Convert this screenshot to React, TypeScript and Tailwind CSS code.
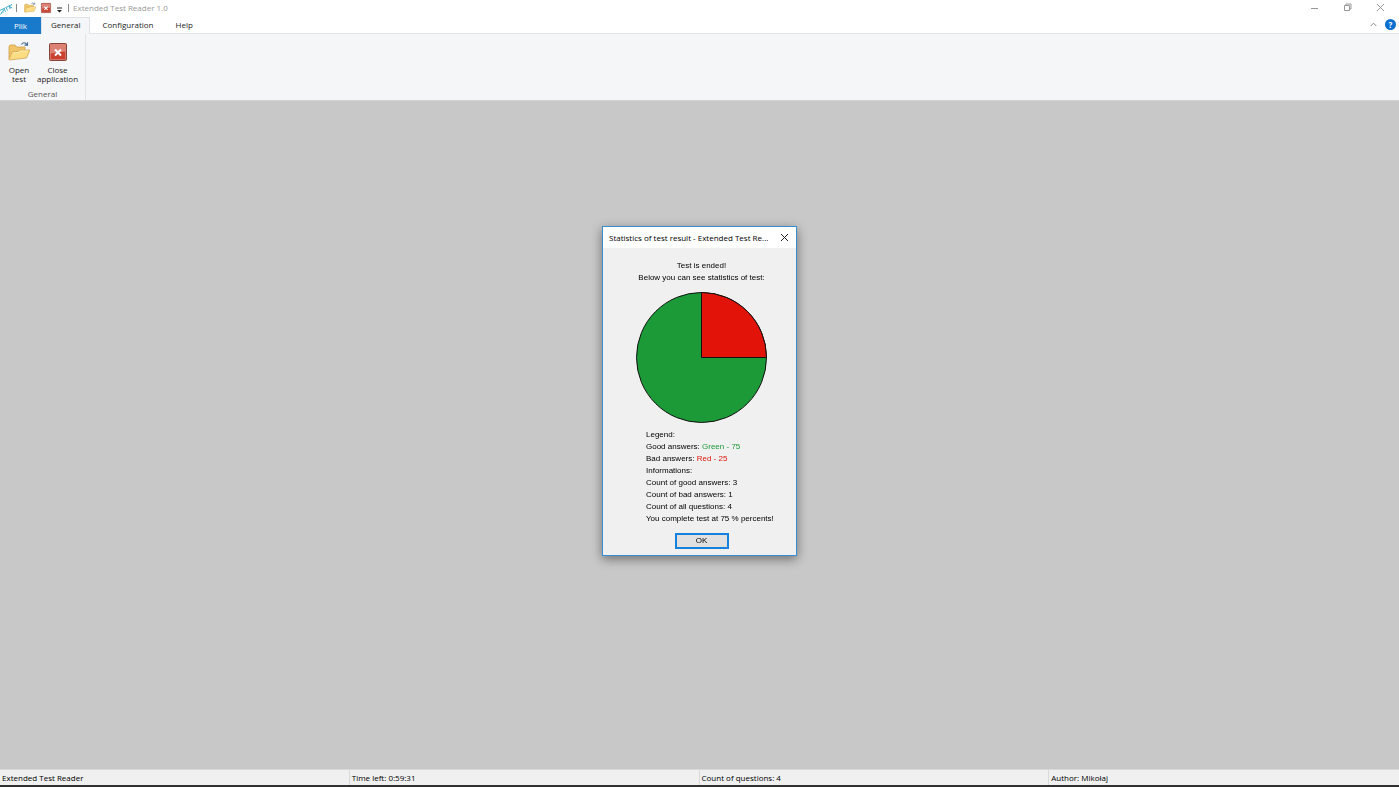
import { useState } from "react"

const TABS = ["General", "Configuration", "Help"]

const STATUS = [
  "Extended Test Reader",
  "Time left: 0:59:31",
  "Count of questions: 4",
  "Author: Mikołaj",
]

const GOOD = 3
const BAD = 1

export default function App() {
  const [tab, setTab] = useState("General")
  const [showStats, setShowStats] = useState(true)

  return (
    <div className="flex h-screen flex-col overflow-hidden bg-[#c8c8c8] font-['Open_Sans','Noto_Sans',sans-serif] text-[8px] leading-[10px] text-[#1e1e1e]">
      <TitleBar />

      {/* Ribbon tabs */}
      <nav className="flex h-[17px] shrink-0 bg-white shadow-[inset_0_-1px_0_#e3e5e8]">
        <button className="w-[41px] bg-[#1979ca] text-white">Plik</button>
        <div className="flex gap-[2px]">
          {TABS.map((t) => (
            <button
              key={t}
              onClick={() => setTab(t)}
              className={`border-x border-t px-[9px] pb-[2px] ${t === tab ? "border-[#dfe2e6] bg-[#f5f6f7]" : "border-transparent"}`}
            >
              {t}
            </button>
          ))}
        </div>
        <div className="ml-auto flex items-center gap-2 pr-[3px] pb-[2px]">
          <button aria-label="Collapse ribbon">
            <svg width="7" height="5" viewBox="0 0 7 5" fill="none" stroke="#888">
              <path d="M.7 4 3.5 1.2 6.3 4" />
            </svg>
          </button>
          <button aria-label="Help" className="h-[11px] w-[11px] rounded-full bg-[#0b6fd0] text-[8px] leading-[11px] font-bold text-white">
            ?
          </button>
        </div>
      </nav>

      {/* Ribbon */}
      <section className="flex h-[67px] shrink-0 border-b border-[#d2d4d6] bg-[#f5f6f7]">
        <div className="flex w-[86px] flex-col border-r border-[#e2e4e6] pt-[7px] pb-px">
          <div className="flex flex-1">
            <button className="flex w-[38px] flex-col items-center">
              <FolderIcon size={22} />
              <span className="mt-[2px] leading-[9px]">Open<br />test</span>
            </button>
            <button className="flex w-[39px] flex-col items-center">
              <CloseAppIcon size={22} />
              <span className="mt-[2px] leading-[9px]">Close<br />application</span>
            </button>
          </div>
          <p className="text-center text-[#555]">General</p>
        </div>
      </section>

      <main className="flex-1" />

      <footer className="grid h-[18px] shrink-0 grid-cols-4 border-t border-b-2 border-t-[#d8d8d8] border-b-[#303030] bg-[#f0f0f0] text-black">
        {STATUS.map((s) => (
          <span key={s} className="border-r border-[#d9d9d9] pt-[3px] pl-[2px] last:border-r-0">{s}</span>
        ))}
      </footer>

      {showStats && <StatsDialog onClose={() => setShowStats(false)} />}
    </div>
  )
}

function TitleBar() {
  return (
    <header className="flex h-[17px] shrink-0 items-center bg-white pb-px">
      <svg width="13" height="13" viewBox="0 0 13 13" fill="none" stroke="#45afd0" strokeWidth="1">
        <path d="M0 8.5 2.5 7l1 2-2.5 2M2.8 7.2l2.5-1.4M4 6.5 5.5 10M6 5.2 7.5 8.5M6 5.3l2.8-1M9 3l1 4M9.5 5 12 2M9.8 5l2.5 1" />
        <path d="M0 12.5 3.5 10.2M9.5 3.5 12 2.2" strokeDasharray="1 .7" />
      </svg>
      <span className="mx-[3px] h-2 w-px bg-[#888]" />
      <button aria-label="Open test" className="ml-1"><FolderIcon size={12} /></button>
      <button aria-label="Close application" className="ml-1"><CloseAppIcon size={12} /></button>
      <button aria-label="Customize toolbar" className="ml-1">
        <svg width="7" height="9" viewBox="0 0 7 9" fill="#222">
          <path d="M1 3.5h5v1H1zM1 6h5L3.5 8.5z" />
        </svg>
      </button>
      <span className="mr-1 ml-[5px] h-2 w-px bg-[#888]" />
      <h1 className="text-[#999]">Extended Test Reader 1.0</h1>
      <div className="ml-auto flex items-center gap-6 pr-[14px] pb-px">
        <button aria-label="Minimize">
          <svg width="9" height="9" viewBox="0 0 9 9" stroke="#999"><path d="M1 5.5h7" /></svg>
        </button>
        <button aria-label="Restore">
          <svg width="9" height="9" viewBox="0 0 9 9" fill="none" stroke="#999">
            <path d="M1.5 2.5h5v5h-5zM3 2.5V1h5v5H6.5" />
          </svg>
        </button>
        <button aria-label="Close">
          <svg width="9" height="9" viewBox="0 0 9 9" stroke="#999"><path d="m1 1 7 7M8 1 1 8" /></svg>
        </button>
      </div>
    </header>
  )
}

function StatsDialog({ onClose }: { onClose: () => void }) {
  const total = GOOD + BAD
  const good = (GOOD / total) * 100
  const bad = (BAD / total) * 100

  return (
    <div className="fixed inset-0 flex items-center justify-center pb-[5px]">
      <div
        role="dialog"
        aria-labelledby="stats-title"
        className="w-[195px] border border-[#3a8bd0] bg-[#f0f0f0] font-['Liberation_Sans',sans-serif] text-black shadow-[0_3px_10px_rgba(0,0,0,0.45)]"
      >
        <div className="flex h-[21px] items-center justify-between bg-white pr-[7px] pl-[6px] font-['Open_Sans','Noto_Sans',sans-serif]">
          <h2 id="stats-title">Statistics of test result - Extended Test Re...</h2>
          <button aria-label="Close" onClick={onClose}>
            <svg width="9" height="9" viewBox="0 0 9 9" stroke="#222"><path d="m1 1 7 7M8 1 1 8" /></svg>
          </button>
        </div>

        <div className="flex flex-col items-center pt-[12px] pr-[10px] pb-[6px] pl-[14px]">
          <p className="text-center leading-[12px]">
            Test is ended!
            <br />
            Below you can see statistics of test:
          </p>
          <Pie bad={bad} />
          <div className="mt-[5px] self-start pl-[29px] leading-[12px] whitespace-nowrap">
            <p>Legend:</p>
            <p>Good answers: <span className="text-[#1c9a38]">Green - {good}</span></p>
            <p>Bad answers: <span className="text-[#e21409]">Red - {bad}</span></p>
            <p>Informations:</p>
            <p>Count of good answers: {GOOD}</p>
            <p>Count of bad answers: {BAD}</p>
            <p>Count of all questions: {total}</p>
            <p>You complete test at {good} % percents!</p>
          </div>
          <button onClick={onClose} className="mt-[8px] h-4 w-[54px] border-2 border-[#1482dc] bg-[#e1e1e1]">
            OK
          </button>
        </div>
      </div>
    </div>
  )
}

function Pie({ bad }: { bad: number }) {
  const angle = (bad / 100) * 2 * Math.PI
  const x = 65.5 + 65 * Math.sin(angle)
  const y = 65.5 - 65 * Math.cos(angle)

  return (
    <svg width="132" height="132" viewBox="0 0 132 132" stroke="#111" className="mt-2">
      <circle cx="65.5" cy="65.5" r="65" fill="#1c9a38" />
      <path d={`M65.5 65.5V.5A65 65 0 0 1 ${x} ${y}Z`} fill="#e21409" />
    </svg>
  )
}

function FolderIcon({ size }: { size: number }) {
  return (
    <svg width={size} height={size} viewBox="0 0 22 22" fill="none">
      <path d="M1 18V5.5L2 4h5l1.5 2H17v4" fill="#f0c568" stroke="#cf9f48" strokeWidth=".8" />
      <path d="M1 18.5 4 11l6-.5L11.5 9H22l-3.5 8-17 2z" fill="#fbdc83" stroke="#d3a450" strokeWidth=".8" />
      <path d="m4.8 12 6-.5 1.5-1.5h7.5" stroke="#fff0b8" strokeWidth=".8" />
      <path d="M13.5 3.5c1.5-2.4 4-2.3 5.3.2M19.5 1.2v3h-3" stroke="#496b91" strokeWidth="1.2" />
    </svg>
  )
}

function CloseAppIcon({ size }: { size: number }) {
  return (
    <svg width={size} height={size} viewBox="0 0 22 22" fill="none">
      <rect x="2.5" y="2.5" width="17" height="17" rx="1" fill="#c9402f" stroke="#85453d" />
      <path d="M3.5 3.5h15v7l-15 2z" fill="#dc8274" />
      <path d="M3.5 18.5v-15h15v15z" stroke="#e39a8d" strokeWidth=".6" />
      <path d="m8 8.5 6 6M14 8.5l-6 6" stroke="#fff" strokeWidth="2" />
    </svg>
  )
}
